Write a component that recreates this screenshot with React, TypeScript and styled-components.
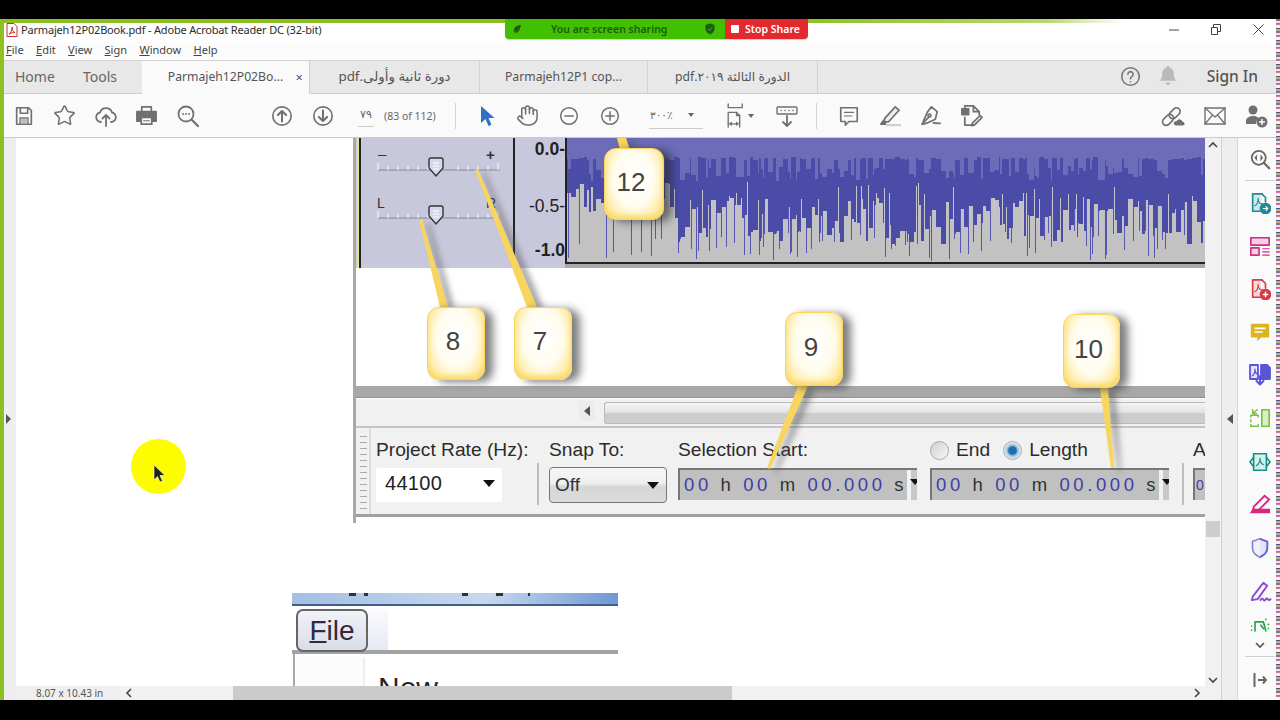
import { ReactNode } from "react";
import styled, { createGlobalStyle } from "styled-components";
import { Hand, Star } from "lucide-react";

const Global = createGlobalStyle`
    html, body { margin: 0; padding: 0; background: #000; overflow: hidden; }
    * { box-sizing: border-box; }
`;

const UI_FONT = `"Noto Sans", "DejaVu Sans", sans-serif`;
const DOC_FONT = `"Liberation Sans", Arial, sans-serif`;

const Screen = styled.div`
    width: 1280px;
    height: 720px;
    background: #000;
    display: flex;
    flex-direction: column;
    position: relative;
    font-family: ${UI_FONT};
`;

const BlackBand = styled.div<{ $h: number }>`
    height: ${(p) => p.$h}px;
    flex: none;
    background: #000;
`;

const Win = styled.div`
    flex: 1;
    min-height: 0;
    display: flex;
`;

const Main = styled.div`
    flex: 1;
    min-width: 0;
    display: flex;
    flex-direction: column;
    border-left: 4px solid #8dc021;
`;

const NoiseStrip = styled.div`
    width: 4px;
    flex: none;
    background: repeating-linear-gradient(180deg, #7c6fa8 0 2px, #e8e8d8 2px 4px, #5f9a8e 4px 5px, #d86f9f 5px 6px, #f4f4f4 6px 9px, #4a5a90 9px 10px, #c4b27a 10px 12px);
`;

const GreenEdge = styled.div`
    height: 4px;
    flex: none;
    background: linear-gradient(90deg, #8dc021 0, #8dc021 62%, #b7d86f 82%, #ffffff 88%);
`;

const TitleBar = styled.div`
    height: 19px;
    flex: none;
    background: #fff;
    display: flex;
    align-items: center;
    padding: 0 0 6px 2px;
    font-size: 11px;
    letter-spacing: -0.18px;
    color: #2c2c2c;
`;

const TitleText = styled.span`
    margin-left: 3px;
    flex: 1;
    white-space: nowrap;
`;

const WinButton = styled.div`
    width: 42px;
    height: 19px;
    display: flex;
    align-items: center;
    justify-content: center;
    flex: none;
    color: #444;
`;

const WinButtons = styled.div`
    display: flex;
    margin-right: -3px;
`;

const MenuBar = styled.div`
    height: 18px;
    flex: none;
    background: #fcfcfc;
    display: flex;
    align-items: center;
    gap: 12.4px;
    padding: 0 0 4px 2px;
    font-size: 11px;
    color: #444;
    span::first-letter { text-decoration: underline; }
`;

const TabBar = styled.div`
    height: 34px;
    flex: none;
    background: #e8e8e8;
    border-top: 1px solid #d2d2d2;
    border-bottom: 1px solid #cfcfcf;
    display: flex;
    align-items: stretch;
    font-size: 12.2px;
    color: #555;
`;

const NavTab = styled.div<{ $w: number; $pad: number }>`
    width: ${(p) => p.$w}px;
    padding: 0 0 2px ${(p) => p.$pad}px;
    display: flex;
    align-items: center;
    font-size: 14px;
    color: #666;
`;

const DocTab = styled.div<{ $active?: boolean; $w: number }>`
    width: ${(p) => p.$w}px;
    display: flex;
    align-items: center;
    justify-content: center;
    padding-bottom: 2px;
    border-right: 1px solid #d2d2d2;
    background: ${(p) => (p.$active ? "#fafafa" : "transparent")};
    margin-bottom: ${(p) => (p.$active ? "-1px" : "0")};
    position: relative;
    white-space: nowrap;
`;

const ArabicName = styled.span<{ $size: number }>`
    font-size: ${(p) => p.$size}px;
`;

const CloseX = styled.span`
    position: absolute;
    right: 6px;
    font-size: 13px;
    color: #555;
`;

const TabRight = styled.div`
    margin-left: auto;
    display: flex;
    align-items: center;
    padding: 0 18px 2px 0;
    color: #777;
`;

const BellGap = styled.div`
    width: 18px;
`;

const SignIn = styled.span`
    font-size: 15.5px;
    font-weight: 500;
    color: #555;
    margin-left: 30px;
`;

const Toolbar = styled.div`
    height: 44px;
    flex: none;
    background: #fafafa;
    border-bottom: 1px solid #cacaca;
    display: flex;
    align-items: center;
    color: #707070;
`;

const ToolSpacer = styled.div`
    flex: 1;
`;

const Slot = styled.div<{ $w?: number; $ml?: number }>`
    width: ${(p) => p.$w ?? 41}px;
    margin-left: ${(p) => p.$ml ?? 0}px;
    height: 32px;
    flex: none;
    display: flex;
    align-items: center;
    justify-content: center;
`;

const BarDivider = styled.div<{ $ml: number }>`
    width: 1px;
    height: 26px;
    flex: none;
    background: #d4d4d4;
    margin-left: ${(p) => p.$ml}px;
`;

const PageBox = styled.div`
    margin-left: 15px;
    width: 16px;
    border-bottom: 1px solid #ccc;
    height: 22px;
    font-size: 11px;
    line-height: 20px;
    text-align: center;
    font-family: "DejaVu Sans", sans-serif;
    color: #666;
    flex: none;
`;

const PageCount = styled.span`
    font-size: 10.5px;
    margin-left: 10px;
    width: 60px;
    flex: none;
    white-space: nowrap;
    color: #666;
`;

const ZoomBox = styled.div`
    margin-left: 19px;
    width: 54px;
    height: 26px;
    flex: none;
    border-bottom: 1px solid #ccc;
    display: flex;
    align-items: center;
    justify-content: space-between;
    padding: 0 9px 0 1px;
    font-size: 10.5px;
    font-family: "DejaVu Sans", sans-serif;
    color: #666;
`;

const Caret = styled.span<{ $size?: number }>`
    width: 0;
    height: 0;
    flex: none;
    border-left: ${(p) => p.$size ?? 3}px solid transparent;
    border-right: ${(p) => p.$size ?? 3}px solid transparent;
    border-top: ${(p) => (p.$size ?? 3) + 1}px solid #666;
`;

const Workspace = styled.div`
    flex: 1;
    min-height: 0;
    display: flex;
`;

const SideGutter = styled.div<{ $w: number; $line?: boolean; $pr?: number }>`
    width: ${(p) => p.$w}px;
    flex: none;
    background: #eeeeee;
    border-left: ${(p) => (p.$line ? "1px solid #d0d0d0" : "none")};
    border-right: ${(p) => (p.$line ? "1px solid #d8d8d8" : "none")};
    display: flex;
    align-items: center;
    justify-content: center;
    padding-right: ${(p) => p.$pr ?? 0}px;
`;

const GutterArrow = styled.span<{ $dir: "left" | "right" }>`
    width: 0;
    height: 0;
    border-top: 5px solid transparent;
    border-bottom: 5px solid transparent;
    ${(p) => (p.$dir === "left" ? "border-right: 6px solid #555;" : "border-left: 5px solid #555;")}
`;

const Center = styled.div`
    flex: 1;
    min-width: 0;
    display: flex;
    flex-direction: column;
`;

const PageRow = styled.div`
    flex: 1;
    min-height: 0;
    display: flex;
`;

const Page = styled.div`
    flex: 1;
    min-width: 0;
    background: #fff;
    overflow: hidden;
`;

const VScroll = styled.div`
    width: 16px;
    flex: none;
    background: #f1f1f1;
    position: relative;
    color: #444;
`;

const VThumb = styled.div`
    position: absolute;
    top: 383px;
    left: 1px;
    width: 14px;
    height: 16px;
    background: #cdcdcd;
`;

const VArrow = styled.div<{ $pos: "top" | "bottom" }>`
    position: absolute;
    left: 0;
    width: 16px;
    ${(p) => (p.$pos === "top" ? "top: 3px;" : "bottom: 2px;")}
    display: flex;
    justify-content: center;
`;

const StatusBar = styled.div`
    height: 14px;
    flex: none;
    display: flex;
    background: #efefef;
    font-size: 10px;
    color: #555;
    align-items: center;
`;

const StatusSize = styled.div`
    width: 104px;
    padding-left: 20px;
    white-space: nowrap;
`;

const HTrack = styled.div`
    flex: 1;
    height: 14px;
    display: flex;
    align-items: center;
    background: #f1f1f1;
    position: relative;
    color: #444;
`;

const HLeft = styled.div`
    width: 113px;
    padding-left: 5px;
    display: flex;
`;

const HThumb = styled.div`
    width: 499px;
    height: 14px;
    background: #cbcbcb;
`;

const HRight = styled.div`
    margin-left: auto;
    padding-right: 20px;
    display: flex;
`;

const SideBar = styled.div`
    width: 38px;
    flex: none;
    background: #fafafa;
    display: flex;
    flex-direction: column;
    align-items: center;
    padding-top: 9px;
    padding-left: 6px;
`;

const SideIcon = styled.div<{ $h: number; $color: string }>`
    height: ${(p) => p.$h}px;
    flex: none;
    display: flex;
    align-items: center;
    justify-content: center;
    color: ${(p) => p.$color};
`;

const SideRule = styled.div<{ $mt: number; $mb: number }>`
    height: 1px;
    width: 30px;
    background: #cfcfcf;
    flex: none;
    margin: ${(p) => p.$mt}px 0 ${(p) => p.$mb}px;
`;

/* first picture in the pdf page */
const Figure = styled.div`
    margin-left: 337px;
    width: 852px;
    height: 385px;
    border-left: 3px solid #a9a9a0;
    position: relative;
    display: flex;
    flex-direction: column;
    font-family: ${DOC_FONT};
`;

const TrackRow = styled.div`
    height: 130px;
    flex: none;
    display: flex;
    background: #c8c8dc;
`;

const TrackPanel = styled.div`
    width: 156px;
    flex: none;
    border-left: 2px solid #e6e68c;
    margin-left: 1px;
`;

const PanelInner = styled.div`
    height: 100%;
    border-left: 2px solid #222;
`;

const Ruler = styled.div`
    width: 52px;
    flex: none;
    display: flex;
    flex-direction: column;
    align-items: flex-end;
    font-size: 17.5px;
    color: #222;
    height: 124px;
    border-left: 2px solid #222;
`;

const RulerMark = styled.span<{ $top: number; $bold?: boolean }>`
    margin-top: ${(p) => p.$top}px;
    font-weight: ${(p) => (p.$bold ? 700 : 400)};
    line-height: 20px;
    white-space: nowrap;
`;

const WaveCol = styled.div`
    flex: 1;
    min-width: 0;
    display: flex;
    flex-direction: column;
`;

const WaveBox = styled.div`
    height: 126px;
    flex: none;
    background: #c2c2c2;
    border-left: 2px solid #222;
    border-bottom: 2px solid #222;
    overflow: hidden;
`;

const WaveFoot = styled.div`
    flex: 1;
    background: #a9a9a9;
`;

const WhiteGap = styled.div`
    height: 118px;
    flex: none;
    background: #fff;
`;

const GreyBar = styled.div`
    height: 12px;
    flex: none;
    background: #a8a8a8;
    border-bottom: 1px solid #8f8f8f;
`;

const ScrollRow = styled.div`
    height: 30px;
    flex: none;
    background: #f1f1f1;
    border-top: 1px solid #fff;
    border-bottom: 2px solid #c4c4c4;
    display: flex;
    align-items: center;
    padding-left: 223px;
`;

const ScrollLeftBtn = styled.div`
    width: 16px;
    height: 20px;
    background: #ececec;
    display: flex;
    align-items: center;
    justify-content: center;
    margin: 0 9px 3px 0;
`;

const ScrollThumb = styled.div`
    flex: 1;
    height: 22px;
    border: 1px solid #bbb;
    border-right: none;
    border-radius: 3px 0 0 3px;
    background: linear-gradient(180deg, #f4f4f4 0, #e4e4e4 45%, #cbcbcb 55%, #cfcfcf 100%);
`;

const SelectionBar = styled.div`
    height: 89px;
    flex: none;
    background: #f1f1f1;
    border-bottom: 3px solid #a0a0a0;
    display: flex;
    overflow: hidden;
`;

const Grip = styled.div`
    width: 13px;
    flex: none;
    margin: 0 5px 0 2px;
    border-right: 2px solid #dcdcdc;
    background: repeating-linear-gradient(180deg, #aaa 0 1px, transparent 1px 6px) 2px 8px / 7px 100% no-repeat;
`;

const Group = styled.div<{ $w: number; $mr?: number }>`
    width: ${(p) => p.$w}px;
    flex: none;
    margin-right: ${(p) => p.$mr ?? 0}px;
    padding-top: 9px;
    display: flex;
    flex-direction: column;
`;

const FieldLabel = styled.div`
    height: 26px;
    line-height: 26px;
    font-size: 19.2px;
    color: #2b2b2b;
    white-space: nowrap;
    display: flex;
    align-items: center;
`;

const RateBox = styled.div`
    margin-top: 5px;
    width: 126px;
    height: 34px;
    background: #fff;
    border-radius: 2px;
    display: flex;
    align-items: center;
    justify-content: space-between;
    padding: 0 7px 3px 9px;
    font-size: 20px;
    letter-spacing: 0.3px;
    color: #222;
`;

const SnapBox = styled.div`
    margin-top: 4px;
    height: 36px;
    border: 1.5px solid #777;
    border-radius: 4px;
    background: linear-gradient(180deg, #f6f6f6 0, #efefef 45%, #d6d6d6 55%, #dcdcdc 100%);
    display: flex;
    align-items: center;
    justify-content: space-between;
    padding: 0 7px 0 5px;
    font-size: 19px;
    color: #333;
`;

const BlackCaret = styled.span`
    width: 0;
    height: 0;
    border-left: 6px solid transparent;
    border-right: 6px solid transparent;
    border-top: 7px solid #111;
`;

const TimeBox = styled.div`
    margin-top: 5px;
    height: 32px;
    background: #c0c0c0;
    border-top: 2px solid #777;
    border-left: 2px solid #777;
    display: flex;
    align-items: center;
    justify-content: space-between;
    padding-left: 4px;
    font-size: 18.5px;
    letter-spacing: 3.6px;
    color: #333;
    white-space: pre;
    overflow: hidden;
`;

const TimeStub = styled(TimeBox)`
    padding-left: 1px;
    font-size: 14px;
    letter-spacing: 0;
`;

const TimeDigits = styled.span`
    color: #3d3da6;
`;

const TimeDrop = styled.div`
    width: 14px;
    height: 100%;
    flex: none;
    background: linear-gradient(90deg, #f2f2f2 0, #f2f2f2 30%, #c8c8c8 30%);
    display: flex;
    align-items: center;
    justify-content: flex-end;
    padding: 0 1px 6px 0;
`;

const TimeCaret = styled.span`
    width: 0;
    height: 0;
    border-left: 5px solid transparent;
    border-right: 5px solid transparent;
    border-top: 6px solid #111;
`;

const Radio = styled.span<{ $on?: boolean }>`
    width: 19px;
    height: 19px;
    border-radius: 50%;
    border: 1.5px solid #aaa;
    background: ${(p) => (p.$on ? "radial-gradient(circle, #1d6fb0 0 30%, #9cc6e4 45%, #eaeaea 70%)" : "linear-gradient(135deg, #cfcfcf, #f8f8f8)")};
    flex: none;
`;

const RadioText = styled.span<{ $ml: number; $mr: number }>`
    margin-left: ${(p) => p.$ml}px;
    margin-right: ${(p) => p.$mr}px;
`;

const VRule = styled.div<{ $mr: number }>`
    width: 2px;
    height: 42px;
    background: #bdbdbd;
    flex: none;
    align-self: flex-start;
    margin-top: 35px;
    margin-right: ${(p) => p.$mr}px;
`;

const Leaders = styled.svg`
    position: absolute;
    left: -3px;
    top: 0;
    width: 852px;
    height: 385px;
    pointer-events: none;
`;

const Callout = styled.div<{ $x: number; $y: number; $w?: number; $h?: number }>`
    position: absolute;
    left: ${(p) => p.$x}px;
    top: ${(p) => p.$y}px;
    width: ${(p) => p.$w ?? 58}px;
    height: ${(p) => p.$h ?? 73}px;
    border-radius: 12px;
    background: radial-gradient(ellipse at 50% 42%, #ffffff 0, #fffdf0 48%, #ffeaa0 80%, #f9d055 100%);
    border: 1.5px solid #fbd45f;
    box-shadow: 8px 2px 8px rgba(40, 40, 40, 0.6), inset 0 -3px 5px #fbd868;
    display: flex;
    align-items: center;
    justify-content: center;
    font-size: 26px;
    color: #444;
    padding: 0 6px 4px 0;
`;

/* second picture, cut by the bottom of the view */
const FigureTwo = styled.div`
    margin: 70px 0 0 276px;
    width: 326px;
    height: 120px;
    font-family: ${DOC_FONT};
    background: #fff;
`;

const BlueBand = styled.div`
    height: 13px;
    background:
        linear-gradient(#333, #333) 57px 0 / 7px 3px no-repeat,
        linear-gradient(#333, #333) 72px 0 / 4px 3px no-repeat,
        linear-gradient(#333, #333) 170px 0 / 6px 3px no-repeat,
        linear-gradient(#333, #333) 204px 0 / 7px 3px no-repeat,
        linear-gradient(#333, #333) 236px 0 / 2px 3px no-repeat,
        linear-gradient(90deg, #a4bfe2 0, #c6d8ee 60%, #6f97d2 100%);
    border-bottom: 2px solid #3e5f88;
`;

const FileRow = styled.div`
    height: 44px;
    padding: 3px 0 0 4px;
    display: flex;
    background: #fff;
`;

const FileButton = styled.div`
    width: 72px;
    height: 43px;
    flex: none;
    border: 2px solid #666;
    border-radius: 7px;
    background: linear-gradient(180deg, #f0f2f8 0, #d9dde9 100%);
    font-size: 28px;
    color: #33283f;
    text-align: center;
    line-height: 39px;
    position: relative;
    z-index: 1;
    span { text-decoration: underline; text-decoration-thickness: 2px; }
`;

const FileGlow = styled.div`
    width: 20px;
    height: 41px;
    background: linear-gradient(180deg, #fafbfd 0, #e6e9f4 100%);
`;

const MenuLine = styled.div`
    height: 4px;
    background: #a3a3a3;
`;

const DropMenu = styled.div`
    display: flex;
    height: 60px;
    border-left: 2px solid #a8a8a8;
    margin-left: 1px;
`;

const DropGutter = styled.div`
    width: 70px;
    margin-top: 3px;
    flex: none;
    background: #fcfcfc;
    border-right: 2px solid #eeeeee;
`;

const DropItem = styled.div`
    margin: 17px 0 0 13px;
    font-size: 30px;
    color: #2a2230;
`;

const ShareBar = styled.div`
    position: absolute;
    left: 505px;
    top: 19px;
    height: 20px;
    display: flex;
    font-size: 10.5px;
    font-weight: 600;
    box-shadow: 0 1px 1px rgba(0, 0, 0, 0.2);
    border-radius: 0 0 4px 4px;
    overflow: hidden;
`;

const ShareGreen = styled.div`
    width: 220px;
    background: #41bf00;
    color: #1c5c10;
    display: flex;
    align-items: center;
    padding-left: 7px;
`;

const ShareText = styled.span`
    margin-left: 29px;
    flex: 1;
    white-space: nowrap;
`;

const ShareShield = styled.svg`
    margin-right: 9px;
`;

const ShareRed = styled.div`
    width: 83px;
    background: #e2292d;
    color: #fff;
    display: flex;
    align-items: center;
    padding-left: 6px;
    gap: 6px;
    white-space: nowrap;
`;

const StopSquare = styled.span`
    width: 8px;
    height: 8px;
    background: #fff;
    border-radius: 1px;
`;

const Cursor = styled.div`
    position: absolute;
    left: 131px;
    top: 439px;
    width: 55px;
    height: 55px;
    border-radius: 50%;
    background: #fdfd00;
    display: flex;
    align-items: center;
    justify-content: center;
    padding: 14px 0 0 2px;
`;

const Ico = ({ children, s = 22, fill = "none" }: { children: ReactNode; s?: number; fill?: string }) => (
    <svg width={s} height={s} viewBox="0 0 24 24" fill={fill} stroke="currentColor" strokeWidth={1.8} strokeLinecap="round" strokeLinejoin="round">
        {children}
    </svg>
);

const Chev = ({ d }: { d: string }) => (
    <svg width="10" height="8" viewBox="0 0 10 8" fill="none" stroke="currentColor" strokeWidth="1.6">
        <path d={d} />
    </svg>
);

// seeded so the wave form stays the same on each load
function makeWave() {
    let seed = 71;
    const rnd = () => {
        seed = (seed * 16807) % 2147483647;
        return seed / 2147483647;
    };
    let dark = "";
    let spike = "";
    let gaps = "";
    let light = "";
    let i = 0;
    while (i < 640) {
        const left = i < 100;
        const width = 1 + Math.floor(rnd() * 5);
        const base = left ? 44 + rnd() * 32 : 60 + rnd() * 46;
        const kind = rnd();
        const comb = 19 + rnd() * 3 + (rnd() < 0.5 ? 8 + rnd() * 14 : 0);
        for (let c = 0; c < width && i < 640; c++, i++) {
            const x = i + 0.5;
            dark += `M${x} 0V${base.toFixed(0)}`;
            light += `M${x} 0V${comb.toFixed(0)}`;
            if (c === 0 && kind < (left ? 0.25 : 0.42)) {
                spike += `M${x} ${base.toFixed(0)}V${(92 + rnd() * 32).toFixed(0)}`;
            } else if (c === 0 && !left && kind < 0.62) {
                gaps += `M${x} ${(44 + rnd() * 20).toFixed(0)}V${base.toFixed(0)}`;
            }
        }
    }
    return { dark, spike, gaps, light };
}
const wave = makeWave();

const SLIDER_TICKS = [0, 10, 20, 30, 40, 50, 60, 80, 90, 100, 110, 120];

const SliderLine = ({ y }: { y: number }) => (
    <g>
        <line x1="17" x2="139" y1={y} y2={y} stroke="#9c9cac" strokeWidth="1.5" />
        {SLIDER_TICKS.map((t) => (
            <line key={t} x1={17 + t} x2={17 + t} y1={y - (t === 0 || t === 120 ? 7 : 4)} y2={y} stroke="#f4f4f8" strokeWidth="1.2" />
        ))}
        <path d={`M68 ${y - 10}q0 -2 2 -2h10q2 0 2 2v8l-7 8l-7 -8z`} fill="#d8d8ec" stroke="#333" strokeWidth="1.4" />
        <path d={`M72 ${y - 7}h6M72 ${y - 4}h6M72 ${y - 1}h6`} stroke="#fff" strokeWidth="1" />
    </g>
);

const LEADERS = [
    "M66 82L69 81L95 169L87 169Z",
    "M122 32L125 31L184 169L174 169Z",
    "M264 0L267 12L277 12L273 0Z",
    "M414 330L417 331L455 248L445 248Z",
    "M758 330L761 330L755 250L747 250Z",
];

const Time = () => (
    <TimeBox>
        <span>
            <TimeDigits>00</TimeDigits> h <TimeDigits>00</TimeDigits> m <TimeDigits>00.000</TimeDigits> s
        </span>
        <TimeDrop>
            <TimeCaret />
        </TimeDrop>
    </TimeBox>
);

const PdfFile = () => (
    <svg width="12" height="14" viewBox="0 0 12 14">
        <path d="M1 .5h7l3 3v10H1z" fill="#fff" stroke="#c9302c" />
        <path d="M3 11c2-1 3-4 3-7c0 3 1 5 3 5.500c-2 0-4 .5-6 1.500z" fill="none" stroke="#c9302c" strokeWidth="1" />
    </svg>
);

export default function App() {
    return (
        <Screen>
            <Global />
            <BlackBand $h={19} />
            <Win>
                <Main>
                    <GreenEdge />
                    <TitleBar>
                        <PdfFile />
                        <TitleText>Parmajeh12P02Book.pdf - Adobe Acrobat Reader DC (32-bit)</TitleText>
                        <WinButtons>
                            <WinButton>
                                <svg width="10" height="10" viewBox="0 0 10 10" stroke="currentColor"><path d="M0 5h10" /></svg>
                            </WinButton>
                            <WinButton>
                                <svg width="10" height="11" viewBox="0 0 10 11" fill="none" stroke="currentColor"><path d="M.5 3.500h6v7h-6zM2.500 3.500v-3h7v7h-3" /></svg>
                            </WinButton>
                            <WinButton>
                                <svg width="11" height="11" viewBox="0 0 11 11" stroke="currentColor"><path d="M.5 .5l10 10M10.500 .5l-10 10" /></svg>
                            </WinButton>
                        </WinButtons>
                    </TitleBar>
                    <MenuBar>
                        <span>File</span>
                        <span>Edit</span>
                        <span>View</span>
                        <span>Sign</span>
                        <span>Window</span>
                        <span>Help</span>
                    </MenuBar>
                    <TabBar>
                        <NavTab $w={68} $pad={11}>Home</NavTab>
                        <NavTab $w={70} $pad={11}>Tools</NavTab>
                        <DocTab $active $w={168}>
                            <span>Parmajeh12P02Bo...</span>
                            <CloseX>×</CloseX>
                        </DocTab>
                        <DocTab $w={170}>
                            <ArabicName $size={13.4} dir="rtl">دورة ثانية وأولى.pdf</ArabicName>
                        </DocTab>
                        <DocTab $w={168}>Parmajeh12P1 cop...</DocTab>
                        <DocTab $w={170}>
                            <ArabicName $size={12.2} dir="rtl">الدورة الثالثة ٢٠١٩.pdf</ArabicName>
                        </DocTab>
                        <TabRight>
                            <Ico s={21}>
                                <circle cx="12" cy="12" r="10" />
                                <path d="M9 9.500a3 3 0 1 1 4.500 2.600c-1 .6-1.500 1.200-1.500 2.400M12 18v.1" />
                            </Ico>
                            <BellGap />
                            <svg width="18" height="20" viewBox="0 0 18 20" fill="#b9b9b9">
                                <path d="M9 0a1.500 1.500 0 0 1 1.500 1.700c3 .7 4.300 3 4.300 6c0 4 1 5.300 2.700 7H.5c1.700-1.700 2.700-3 2.700-7c0-3 1.300-5.300 4.300-6A1.500 1.500 0 0 1 9 0zM6.500 16.500h5a2.500 2.500 0 0 1-5 0z" />
                            </svg>
                            <SignIn>Sign In</SignIn>
                        </TabRight>
                    </TabBar>
                    <Toolbar>
                        <Slot $ml={-1}>
                            <Ico>
                                <path d="M4 3h13l3 3v15H4z" />
                                <path d="M8 3v6h8V3" />
                                <rect x="7.500" y="14" width="9" height="7" fill="#bdbdbd" strokeWidth="1.200" />
                            </Ico>
                        </Slot>
                        <Slot><Star size={23} strokeWidth={1.6} /></Slot>
                        <Slot>
                            <Ico s={24}>
                                <path d="M7 18a4.800 4.800 0 0 1-1-9.500a6.300 6.300 0 0 1 12 0a4.800 4.800 0 0 1-1 9.500" />
                                <path d="M12 22V11M8.500 14.500L12 11l3.500 3.500" />
                            </Ico>
                        </Slot>
                        <Slot>
                            <Ico s={23}>
                                <path d="M7 8V3h10v5" />
                                <path d="M2 8h20v10h-4v-3H6v3H2z" fill="currentColor" />
                                <rect x="6.500" y="14" width="11" height="7" fill="#fafafa" />
                                <path d="M9 17.500h6" strokeWidth="1.200" />
                            </Ico>
                        </Slot>
                        <Slot>
                            <Ico s={24}>
                                <circle cx="10" cy="10" r="7.500" />
                                <path d="M15.500 15.500L22 22" strokeWidth="2.200" />
                                <path d="M7 10h.1M10 10h.1M13 10h.1" strokeWidth="1.800" />
                            </Ico>
                        </Slot>
                        <Slot $ml={53}>
                            <Ico>
                                <circle cx="12" cy="12" r="10" />
                                <path d="M12 18V6.500M7.500 11L12 6.500l4.500 4.500" strokeWidth="2.200" />
                            </Ico>
                        </Slot>
                        <Slot>
                            <Ico>
                                <circle cx="12" cy="12" r="10" />
                                <path d="M12 6v11.500M7.500 13l4.500 4.500l4.500-4.500" strokeWidth="2.200" />
                            </Ico>
                        </Slot>
                        <PageBox>٧٩</PageBox>
                        <PageCount>(83 of 112)</PageCount>
                        <BarDivider $ml={11} />
                        <Slot $ml={10}>
                            <svg width="16" height="22" viewBox="0 0 16 22" fill="#2f6fc4">
                                <path d="M2 1v17l4.500-4l3 7l3-1.300l-3-6.700h6z" />
                            </svg>
                        </Slot>
                        <Slot><Hand size={23} strokeWidth={1.6} /></Slot>
                        <Slot>
                            <Ico s={20}>
                                <circle cx="12" cy="12" r="10" />
                                <path d="M7 12h10" />
                            </Ico>
                        </Slot>
                        <Slot>
                            <Ico s={20}>
                                <circle cx="12" cy="12" r="10" />
                                <path d="M7 12h10M12 7v10" />
                            </Ico>
                        </Slot>
                        <ZoomBox>
                            ٣٠٠٪
                            <Caret />
                        </ZoomBox>
                        <Slot $w={26} $ml={19}>
                            <Ico s={25}>
                                <g strokeWidth="1.300">
                                    <path d="M5 1v3.500h13.500V1" />
                                    <path d="M5 23v-14h8l3 3v11" />
                                    <path d="M13 9v3h3M6.500 20h8M6.500 20l1.500-1.200M6.500 20l1.500 1.200M14.500 20l-1.500-1.200M14.500 20l-1.500 1.200" />
                                </g>
                            </Ico>
                        </Slot>
                        <Caret />
                        <Slot $ml={12}>
                            <Ico s={24}>
                                <rect x="2" y="3" width="20" height="7" rx="1" strokeWidth="1.400" />
                                <path d="M6 6.500h.1M10 6.500h.1M14 6.500h.1M18 6.500h.1" strokeWidth="1.600" />
                                <path d="M12 12v10M8 18l4 4l4-4" />
                            </Ico>
                        </Slot>
                        <BarDivider $ml={9} />
                        <Slot $ml={11}>
                            <Ico s={22}>
                                <path d="M3 3h18v15H12l-4 4v-4H3z" />
                                <path d="M7 8h10M7 12h8" strokeWidth="1.300" />
                            </Ico>
                        </Slot>
                        <Slot>
                            <Ico s={23}>
                                <path d="M7 15L18 3l4 3.500L11 18.500l-4.500 .5z" fill="#eee" />
                                <path d="M6 17l-3 4h5z" fill="currentColor" />
                                <path d="M9 22h14" stroke="#cfcfcf" strokeWidth="2.500" />
                            </Ico>
                        </Slot>
                        <Slot>
                            <Ico s={23}>
                                <path d="M13 3l6 5l-2 8l-9 4l-4 1l1-4l4-9z" />
                                <path d="M3 21l7-7" />
                                <circle cx="11" cy="12" r="1.500" />
                                <path d="M15 20c1-1 1.500-.5 2 0s1 .5 1.500 0s1-.5 1.500 0s1 .5 2 0" />
                            </Ico>
                        </Slot>
                        <Slot>
                            <Ico s={23}>
                                <rect x="2" y="5" width="7" height="6" fill="currentColor" />
                                <path d="M5 5V2h9l6 6v3M14 2v6h6M5 14v8h9" />
                                <path d="M13 20l8-8l2 2l-8 8l-3 .5z" />
                            </Ico>
                        </Slot>
                        <ToolSpacer />
                        <Slot>
                            <Ico s={25}>
                                <g transform="rotate(-45 11 12)" strokeWidth="1.600">
                                    <rect x="-1" y="8.500" width="12" height="7" rx="3.500" />
                                    <rect x="8" y="8.500" width="12" height="7" rx="3.500" />
                                </g>
                                <path d="M14 22a2.500 2.500 0 0 1 .5-5a3.500 3.500 0 0 1 6.500 .5a2.300 2.300 0 0 1 .5 4.500z" fill="currentColor" stroke="#fafafa" strokeWidth="1" />
                            </Ico>
                        </Slot>
                        <Slot>
                            <Ico s={24}>
                                <rect x="2" y="4" width="20" height="16" strokeWidth="1.400" />
                                <path d="M2 4l10 9l10-9M2 20l7.500-9M22 20l-7.500-9" strokeWidth="1.200" />
                            </Ico>
                        </Slot>
                        <Slot>
                            <svg width="24" height="24" viewBox="0 0 24 24" fill="currentColor">
                                <circle cx="9" cy="6" r="4.500" />
                                <path d="M2 20v-3c0-3 3-4 5-5h4c1.500 .7 3 1.300 4 2.500a6 6 0 0 0-3 5.500z" />
                                <circle cx="18" cy="18" r="5.500" />
                                <path d="M15 18h6M18 15v6" stroke="#fafafa" strokeWidth="1.500" />
                            </svg>
                        </Slot>
                    </Toolbar>
                    <Workspace>
                        <SideGutter $w={12} $pr={4}><GutterArrow $dir="right" /></SideGutter>
                        <Center>
                            <PageRow>
                                <Page>
                                    <Figure>
                                        <TrackRow>
                                            <TrackPanel>
                                                <PanelInner>
                                                    <svg width="150" height="130" viewBox="0 0 150 130">
                                                        <g fontFamily="Liberation Sans" fontSize="15" fill="#333">
                                                            <text x="17" y="21">–</text>
                                                            <text x="125" y="22" fontWeight="700">+</text>
                                                            <text x="16" y="70" fontSize="14">L</text>
                                                            <text x="125" y="70" fontSize="14">R</text>
                                                        </g>
                                                        <SliderLine y={32} />
                                                        <SliderLine y={80} />
                                                    </svg>
                                                </PanelInner>
                                            </TrackPanel>
                                            <Ruler>
                                                <RulerMark $top={1} $bold>0.0-</RulerMark>
                                                <RulerMark $top={37}>-0.5-</RulerMark>
                                                <RulerMark $top={24} $bold>-1.0</RulerMark>
                                            </Ruler>
                                            <WaveCol>
                                                <WaveBox>
                                                    <svg width="640" height="124" viewBox="0 0 640 124" fill="none" strokeWidth="1">
                                                        <path d={wave.dark} stroke="#4a4ca8" />
                                                        <path d={wave.gaps} stroke="#c6c6d2" />
                                                        <path d={wave.spike} stroke="#5656b0" />
                                                        <path d={wave.light} stroke="#6c6cb8" />
                                                    </svg>
                                                </WaveBox>
                                                <WaveFoot />
                                            </WaveCol>
                                        </TrackRow>
                                        <WhiteGap />
                                        <GreyBar />
                                        <ScrollRow>
                                            <ScrollLeftBtn>
                                                <GutterArrow $dir="left" />
                                            </ScrollLeftBtn>
                                            <ScrollThumb />
                                        </ScrollRow>
                                        <SelectionBar>
                                            <Grip />
                                            <Group $w={161}>
                                                <FieldLabel>Project Rate (Hz):</FieldLabel>
                                                <RateBox>
                                                    44100
                                                    <BlackCaret />
                                                </RateBox>
                                            </Group>
                                            <VRule $mr={10} />
                                            <Group $w={118} $mr={11}>
                                                <FieldLabel>Snap To:</FieldLabel>
                                                <SnapBox>
                                                    Off
                                                    <BlackCaret />
                                                </SnapBox>
                                            </Group>
                                            <Group $w={239} $mr={13}>
                                                <FieldLabel>Selection Start:</FieldLabel>
                                                <Time />
                                            </Group>
                                            <Group $w={239} $mr={13}>
                                                <FieldLabel>
                                                    <Radio />
                                                    <RadioText $ml={7} $mr={13}>End</RadioText>
                                                    <Radio $on />
                                                    <RadioText $ml={7} $mr={0}>Length</RadioText>
                                                </FieldLabel>
                                                <Time />
                                            </Group>
                                            <VRule $mr={9} />
                                            <Group $w={13}>
                                                <FieldLabel>A</FieldLabel>
                                                <TimeStub>
                                                    <TimeDigits>0</TimeDigits>
                                                </TimeStub>
                                            </Group>
                                        </SelectionBar>
                                        <Leaders viewBox="0 0 852 385">
                                            <defs>
                                                <filter id="blur" x="-30%" y="-10%" width="160%" height="120%">
                                                    <feGaussianBlur stdDeviation="3" />
                                                </filter>
                                            </defs>
                                            <g fill="#555" opacity="0.55" filter="url(#blur)" transform="translate(7 3)">
                                                {LEADERS.map((d) => <path key={d} d={d} />)}
                                            </g>
                                            <g fill="#f8d55e">
                                                {LEADERS.map((d) => <path key={d} d={d} />)}
                                            </g>
                                        </Leaders>
                                        <Callout $x={71} $y={169}>8</Callout>
                                        <Callout $x={158} $y={169}>7</Callout>
                                        <Callout $x={248} $y={10} $w={60} $h={72}>12</Callout>
                                        <Callout $x={429} $y={174} $h={74}>9</Callout>
                                        <Callout $x={707} $y={176} $w={57} $h={74}>10</Callout>
                                    </Figure>
                                    <FigureTwo>
                                        <BlueBand />
                                        <FileRow>
                                            <FileButton><span>F</span>ile</FileButton>
                                            <FileGlow />
                                        </FileRow>
                                        <MenuLine />
                                        <DropMenu>
                                            <DropGutter />
                                            <DropItem>New</DropItem>
                                        </DropMenu>
                                    </FigureTwo>
                                </Page>
                                <VScroll>
                                    <VArrow $pos="top"><Chev d="M1 6l4-4l4 4" /></VArrow>
                                    <VThumb />
                                    <VArrow $pos="bottom"><Chev d="M1 2l4 4l4-4" /></VArrow>
                                </VScroll>
                            </PageRow>
                            <StatusBar>
                                <StatusSize>8.07 x 10.43 in</StatusSize>
                                <HTrack>
                                    <HLeft>
                                        <svg width="8" height="10" viewBox="0 0 8 10" fill="none" stroke="currentColor" strokeWidth="1.600"><path d="M6 1L2 5l4 4" /></svg>
                                    </HLeft>
                                    <HThumb />
                                    <HRight>
                                        <svg width="8" height="10" viewBox="0 0 8 10" fill="none" stroke="currentColor" strokeWidth="1.600"><path d="M2 1l4 4l-4 4" /></svg>
                                    </HRight>
                                </HTrack>
                            </StatusBar>
                        </Center>
                        <SideGutter $w={17} $line><GutterArrow $dir="left" /></SideGutter>
                        <SideBar>
                            <SideIcon $h={24} $color="#666">
                                <Ico s={21}>
                                    <circle cx="10" cy="10" r="8" strokeWidth="2" />
                                    <path d="M16 16l6 6" strokeWidth="2.500" />
                                    <path d="M8 7l-2.500 3L8 13M12 7l2.500 3L12 13" fill="currentColor" strokeWidth="1" />
                                </Ico>
                            </SideIcon>
                            <SideRule $mt={9} $mb={0} />
                            <SideIcon $h={43} $color="#1f8a94">
                                <Ico>
                                    <path d="M14 2H4v19h8" fill="#cfe9ea" />
                                    <path d="M14 2l4 4v5" />
                                    <path d="M6 15c3-1 4-5 4-8c0 3 1 6 5 6" strokeWidth="1.200" />
                                    <circle cx="18" cy="18" r="5.500" fill="currentColor" />
                                    <path d="M15.500 18h5M18.500 16l2 2l-2 2" stroke="#fff" strokeWidth="1.300" />
                                </Ico>
                            </SideIcon>
                            <SideIcon $h={43} $color="#cf2f87">
                                <Ico>
                                    <rect x="2" y="3" width="20" height="8" fill="#f6cfe3" />
                                    <rect x="2" y="14" width="9" height="8" fill="#f6cfe3" />
                                    <path d="M15 15h7M15 18.500h7M15 22h7" strokeWidth="1.300" />
                                </Ico>
                            </SideIcon>
                            <SideIcon $h={43} $color="#d63a45">
                                <Ico>
                                    <path d="M14 2H4v19h8" fill="#f8dcdc" />
                                    <path d="M14 2l4 4v5" />
                                    <path d="M6 15c3-1 4-5 4-8c0 3 1 6 5 6" strokeWidth="1.200" />
                                    <circle cx="18" cy="18" r="5.500" fill="currentColor" />
                                    <path d="M15.500 18h5M18 15.500v5" stroke="#fff" strokeWidth="1.500" />
                                </Ico>
                            </SideIcon>
                            <SideIcon $h={43} $color="#dcb51e">
                                <svg width="22" height="22" viewBox="0 0 24 24" fill="currentColor">
                                    <path d="M3 3h18a1 1 0 0 1 1 1v13a1 1 0 0 1-1 1H13l-4 4v-4H3a1 1 0 0 1-1-1V4a1 1 0 0 1 1-1z" />
                                    <path d="M6 8h12M6 12h9" stroke="#fff" strokeWidth="1.800" />
                                </svg>
                            </SideIcon>
                            <SideIcon $h={42} $color="#5a55d6">
                                <Ico s={24}>
                                    <path d="M2 3h8l0 14H2z" fill="#e4e3fa" />
                                    <path d="M4 14c2-1 3-4 3-7c0 3 1 5 3 5" strokeWidth="1.200" />
                                    <path d="M13 3h6l3 3v11h-9z" fill="currentColor" />
                                    <path d="M12 14v8M8.500 19l3.500 3.500l3.500-3.500" strokeWidth="2" />
                                </Ico>
                            </SideIcon>
                            <SideIcon $h={46} $color="#79c142">
                                <Ico>
                                    <rect x="14" y="3" width="8" height="18" fill="#d9efc8" />
                                    <path d="M2 9h8M2 21h8M2 9v2M2 14v2M2 19v2M10 9v2M10 19v2M9 3L4 7M4 3v4h4" strokeWidth="1.600" />
                                </Ico>
                            </SideIcon>
                            <SideIcon $h={42} $color="#17918a">
                                <Ico>
                                    <path d="M5 3h14v18H5z" fill="#d5f0ee" />
                                    <path d="M5 7L1 12l4 5M19 7l4 5l-4 5" />
                                    <path d="M8 16c2-1 4-4 4-8c0 3 1 6 4 7" strokeWidth="1.300" />
                                </Ico>
                            </SideIcon>
                            <SideIcon $h={44} $color="#d9267e">
                                <svg width="22" height="22" viewBox="0 0 24 24" fill="currentColor">
                                    <path d="M5 14L17 2l5 4L11 17H5z" fill="none" stroke="currentColor" strokeWidth="2" />
                                    <path d="M5 14l-4 7h22v-5H11v1H5z" />
                                </svg>
                            </SideIcon>
                            <SideIcon $h={42} $color="#5f5fd0">
                                <Ico s={22}>
                                    <path d="M12 2l8 3v7c0 5-4 8-8 10c-4-2-8-5-8-10V5z" fill="#e4e4f8" strokeWidth="2" />
                                    <path d="M12 2v20c-4-2-8-5-8-10V5z" fill="#fafafa" stroke="none" opacity="0.6" />
                                </Ico>
                            </SideIcon>
                            <SideIcon $h={44} $color="#8a4fd0">
                                <Ico s={23}>
                                    <path d="M4 17L15 3l4 3L9 20l-6 1z" strokeWidth="2" />
                                    <path d="M12 21c1-2 2-2 3-.5s1.500 1 2.500-.5s1.500-.5 2.500 .5s1.500 0 2.500-.5" strokeWidth="2" />
                                </Ico>
                            </SideIcon>
                            <SideIcon $h={26} $color="#2aa148">
                                <Ico s={20}>
                                    <path d="M6 18V7h10l3 11" strokeWidth="2" />
                                    <path d="M2 12v.1M2 17v.1M22 10v.1M22 15v.1M19 4v.1M13 11l3 4" strokeWidth="2" />
                                </Ico>
                            </SideIcon>
                            <SideIcon $h={12} $color="#555">
                                <Chev d="M1 2l4 4l4-4" />
                            </SideIcon>
                            <SideRule $mt={5} $mb={5} />
                            <SideIcon $h={36} $color="#666">
                                <svg width="14" height="16" viewBox="0 0 14 16" fill="none" stroke="currentColor" strokeWidth="2">
                                    <path d="M1.500 1v14M5 8h8M10 4.500L13 8l-3 3.500" />
                                </svg>
                            </SideIcon>
                        </SideBar>
                    </Workspace>
                </Main>
                <NoiseStrip />
            </Win>
            <BlackBand $h={20} />
            <ShareBar>
                <ShareGreen>
                    <svg width="10" height="10" viewBox="0 0 10 10" fill="#1c5c10"><path d="M9 1C5 1 1 3 2 9c1-2 2-3 3-4c-1 1-1.500 2-2 4c3 0 5-3 6-8z" /></svg>
                    <ShareText>You are screen sharing</ShareText>
                    <ShareShield width="12" height="12" viewBox="0 0 12 12">
                        <path d="M6 .5l4.500 1.500v4c0 2.500-2 4.500-4.500 5.500C3.500 10.500 1.500 8.500 1.500 6V2z" fill="#1c5c10" />
                        <path d="M4 6l1.500 1.500L8 4.500" stroke="#41bf00" fill="none" />
                    </ShareShield>
                </ShareGreen>
                <ShareRed>
                    <StopSquare />
                    Stop Share
                </ShareRed>
            </ShareBar>
            <Cursor>
                <svg width="13" height="19" viewBox="0 0 13 19" fill="#222" stroke="#fff" strokeWidth="0.6">
                    <path d="M1 1v15l3.500-3.500l2.500 5.500l2.500-1l-2.500-5.500h5z" />
                </svg>
            </Cursor>
        </Screen>
    );
}
